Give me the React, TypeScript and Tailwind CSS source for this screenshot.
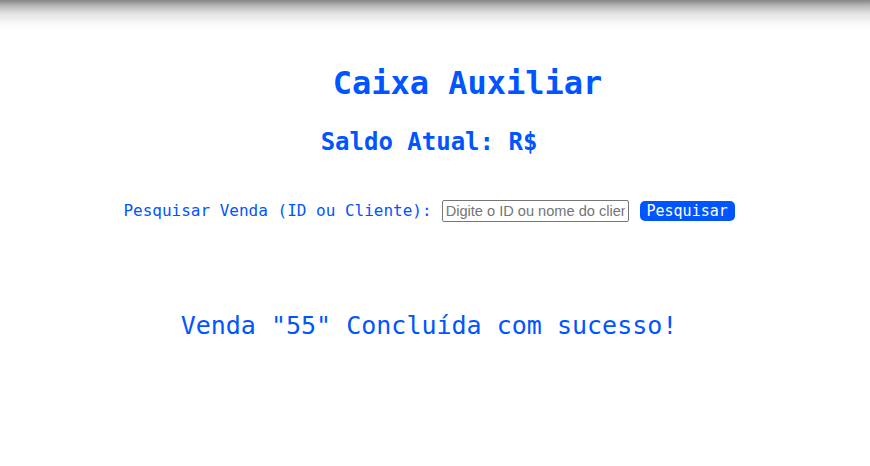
import { useState } from "react";

const BLUE = "text-[#0055ff]";

export default function App() {
  const [query, setQuery] = useState("");

  return (
    <div className="min-h-screen bg-white font-['DejaVu_Sans_Mono',monospace]">
      {/* top browser shade */}
      <div className="h-[30px] bg-[linear-gradient(to_bottom,#858585,#b9b9b9_20%,#e2e2e2_45%,#f7f7f7_75%,#ffffff)]" />

      <main className="flex flex-col items-center pr-[12px] text-center">
        <h1
          className={`mt-[33px] pl-[77px] text-[32px] font-bold leading-[40px] ${BLUE}`}
        >
          Caixa Auxiliar
        </h1>

        <h2 className={`mt-[24px] text-[24px] font-bold leading-[30px] ${BLUE}`}>
          Saldo Atual: R$
        </h2>

        {/* search */}
        <div className="mt-[43px] flex h-[22px] items-center">
          <label htmlFor="busca" className={`text-[16px] leading-[22px] ${BLUE}`}>
            Pesquisar Venda (ID ou Cliente):
          </label>
          <input
            id="busca"
            value={query}
            onChange={(e) => setQuery(e.target.value)}
            placeholder="Digite o ID ou nome do cliente"
            className="ml-[10px] h-[22px] w-[187px] rounded-[2px] border border-[#767676] px-[3px] font-['Liberation_Sans',Arial,sans-serif] text-[14.6px] text-black placeholder:text-[#757575] focus:outline-none"
          />
          <button
            type="button"
            className="ml-[11px] h-[20px] w-[95px] rounded-[5px] bg-[#0055ff] text-[15px] leading-[20px] text-white"
          >
            Pesquisar
          </button>
        </div>

        <p className={`mt-[89px] text-[25px] leading-[30px] ${BLUE}`}>
          Venda "55" Concluída com sucesso!
        </p>
      </main>
    </div>
  );
}
